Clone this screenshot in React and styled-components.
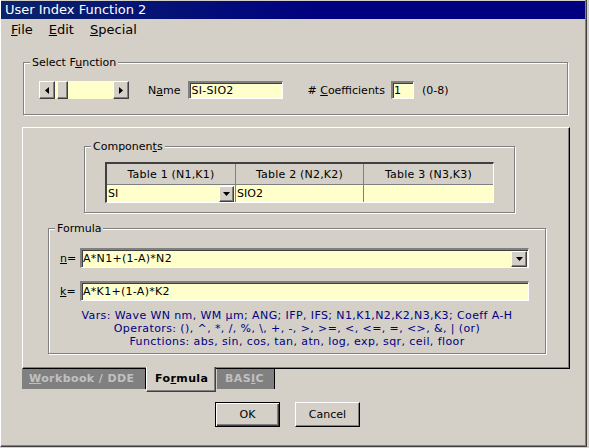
import React from "react";
import styled, { createGlobalStyle, css } from "styled-components";

const GlobalStyle = createGlobalStyle`
  html, body {
    margin: 0;
    padding: 0;
    background: #d4d0c8;
  }
  body {
    font-family: "DejaVu Sans", Verdana, sans-serif;
    font-size: 11px;
    color: #000;
  }
`;

const raised = css`
  border: 1px solid;
  border-color: #ffffff #404040 #404040 #ffffff;
  box-shadow: inset -1px -1px 0 #808080;
`;

const sunken = css`
  border-style: solid;
  border-width: 2px 1px 1px 2px;
  border-color: #808080 #ffffff #ffffff #808080;
  box-shadow: inset 1px 1px 0 #404040;
`;

const etched = css`
  position: relative;
  box-sizing: border-box;
  border: 1px solid #808080;
  box-shadow: inset 1px 1px 0 #ffffff, 1px 1px 0 #ffffff;
`;

const Window = styled.div`
  width: 587px;
  height: 447px;
  box-sizing: border-box;
  border-left: 1px solid #ffffff;
  border-right: 1px solid #404040;
  border-bottom: 1px solid #404040;
  padding: 1px 1px 1px 0;
  box-shadow: inset -1px -1px 0 #808080;
  background: #d4d0c8;
  display: flex;
  flex-direction: column;
`;

const TitleBar = styled.div`
  height: 18px;
  background: linear-gradient(to right, #0a246a, #000080 55%, #000080);
  color: #ffffff;
  font-size: 13px;
  line-height: 18px;
  padding-left: 4px;
`;

const MenuBar = styled.div`
  display: flex;
  height: 21px;
  padding-left: 2px;
  font-size: 13px;
  line-height: 21px;
`;

const MenuItem = styled.span`
  padding: 0 8px;
`;

const GroupBox = styled.div`
  ${etched};
  margin: ${(p) => p.$margin};
  width: ${(p) => p.$w}px;
  height: ${(p) => p.$h}px;
  padding: ${(p) => p.$pad || "0"};
`;

const Caption = styled.span`
  position: absolute;
  top: -7px;
  left: 6px;
  padding: 0 2px;
  background: #d4d0c8;
  line-height: 13px;
`;

const Row = styled.div`
  display: flex;
  align-items: center;
  padding-left: ${(p) => p.$pl || 0}px;
  margin-top: ${(p) => p.$mt || 0}px;
`;

const Scroll = styled.div`
  display: flex;
  width: 90px;
  height: 18px;
  background: #ffffcc;
`;

const ScrollBtn = styled.div`
  ${raised};
  box-sizing: border-box;
  width: 16px;
  height: 18px;
  background: #d4d0c8;
  display: flex;
  align-items: center;
  justify-content: center;
`;

const Thumb = styled.div`
  ${raised};
  box-sizing: border-box;
  width: 11px;
  height: 18px;
  margin-left: 2px;
  background: #d4d0c8;
`;

const Track = styled.div`
  flex: 1;
`;

const Label = styled.span`
  margin-left: ${(p) => p.$ml || 0}px;
  white-space: nowrap;
`;

const TextBox = styled.div`
  ${sunken};
  box-sizing: border-box;
  width: ${(p) => p.$w}px;
  height: ${(p) => p.$h || 18}px;
  margin-left: ${(p) => p.$ml || 0}px;
  background: #ffffcc;
  padding-left: 1px;
  display: flex;
  align-items: center;
  white-space: nowrap;
  letter-spacing: 0.3px;
`;

const Panel = styled.div`
  box-sizing: border-box;
  margin: 12px 0 0 21px;
  width: 548px;
  height: 242px;
  border: 1px solid;
  border-color: #ffffff #000000 #000000 #ffffff;
  box-shadow: inset -1px -1px 0 #808080;
  display: flex;
  flex-direction: column;
`;

const Grid = styled.div`
  box-sizing: border-box;
  width: 389px;
  height: 41px;
  border-style: solid;
  border-width: 2px 1px 1px 2px;
  border-color: #404040 #ffffff #ffffff #404040;
  display: grid;
  grid-template-columns: 129px 128px 1fr;
  grid-template-rows: 21px 17px;
`;

const HeadCell = styled.div`
  background: #d4d0c8;
  border-bottom: 1px solid #808080;
  border-right: ${(p) => (p.$last ? "none" : "1px solid #808080")};
  display: flex;
  align-items: center;
  justify-content: center;
  padding-top: 1px;
  letter-spacing: 0.2px;
`;

const DataCell = styled.div`
  background: #ffffcc;
  border-right: ${(p) => (p.$last ? "none" : "1px solid #808080")};
  display: flex;
  align-items: center;
  padding-left: 1px;
`;

const DropBtn = styled.div`
  ${raised};
  box-sizing: border-box;
  width: ${(p) => p.$w || 15}px;
  height: 16px;
  margin-left: auto;
  margin-right: 1px;
  background: #d4d0c8;
  display: flex;
  align-items: center;
  justify-content: center;
`;

const FieldLabel = styled.span`
  width: 20px;
`;

const Notes = styled.div`
  margin-top: 8px;
  text-align: center;
  color: #000080;
  line-height: 13px;
  letter-spacing: 0.4px;
  white-space: nowrap;
`;

const Tabs = styled.div`
  display: flex;
  align-items: flex-start;
  margin-left: 21px;
  height: 23px;
`;

const Tab = styled.div`
  box-sizing: border-box;
  width: ${(p) => p.$w}px;
  margin-right: ${(p) => p.$mr || 0}px;
  font-weight: bold;
  white-space: nowrap;
  letter-spacing: 0.4px;
  ${(p) =>
    p.$active
      ? css`
          position: relative;
          margin-top: -2px;
          height: 25px;
          padding: 2px 0 0 8px;
          line-height: 20px;
          background: #d4d0c8;
          color: #000000;
          border-left: 1px solid #ffffff;
          border-right: 1px solid #404040;
          border-bottom: 1px solid #404040;
          box-shadow: inset -1px -1px 0 #808080;
        `
      : css`
          height: 20px;
          padding-left: ${p.$pl || 7}px;
          line-height: 20px;
          background: #808080;
          color: #c0c0c0;
          border-right: 1px solid #000000;
        `}
`;

const Buttons = styled.div`
  display: flex;
  margin: 10px 0 0 214px;
  gap: 15px;
`;

const Button = styled.div`
  box-sizing: border-box;
  width: 65px;
  height: 25px;
  display: flex;
  align-items: center;
  justify-content: center;
  background: #d4d0c8;
  ${(p) =>
    p.$default
      ? css`
          border: 1px solid #000000;
          box-shadow: inset 1px 1px 0 #ffffff, inset -1px -1px 0 #404040,
            inset -2px -2px 0 #808080;
        `
      : css`
          border: 1px solid;
          border-color: #ffffff #000000 #000000 #ffffff;
          box-shadow: inset -1px -1px 0 #808080;
        `}
`;

const Arrow = ({ dir }) => {
  const pts = {
    left: "4,0 4,7 0,3.5",
    right: "0,0 0,7 4,3.5",
    down: "0,0 7,0 3.5,4",
  }[dir];
  const w = dir === "down" ? 7 : 4;
  const h = dir === "down" ? 4 : 7;
  return (
    <svg width={w} height={h} viewBox={`0 0 ${w} ${h}`}>
      <polygon points={pts} fill="#000" />
    </svg>
  );
};

export default function App() {
  return (
    <>
      <GlobalStyle />
      <Window>
        <TitleBar>User Index Function 2</TitleBar>
        <MenuBar>
          <MenuItem>
            <u>F</u>ile
          </MenuItem>
          <MenuItem>
            <u>E</u>dit
          </MenuItem>
          <MenuItem>
            <u>S</u>pecial
          </MenuItem>
        </MenuBar>

        <GroupBox $margin="22px 0 0 22px" $w={545} $h={53} $pad="18px 0 0 15px">
          <Caption>
            Select F<u>u</u>nction
          </Caption>
          <Row>
            <Scroll>
              <ScrollBtn>
                <Arrow dir="left" />
              </ScrollBtn>
              <Thumb />
              <Track />
              <ScrollBtn>
                <Arrow dir="right" />
              </ScrollBtn>
            </Scroll>
            <Label $ml={19}>
              N<u>a</u>me
            </Label>
            <TextBox $w={95} $ml={8}>
              SI-SIO2
            </TextBox>
            <Label $ml={24}>
              # <u>C</u>oefficients
            </Label>
            <TextBox $w={23} $ml={6}>
              1
            </TextBox>
            <Label $ml={8}>(0-8)</Label>
          </Row>
        </GroupBox>

        <Panel>
          <GroupBox $margin="18px 0 0 61px" $w={431} $h={67} $pad="15px 0 0 20px">
            <Caption>
              Componen<u>t</u>s
            </Caption>
            <Grid>
              <HeadCell>Table 1 (N1,K1)</HeadCell>
              <HeadCell>Table 2 (N2,K2)</HeadCell>
              <HeadCell $last>Table 3 (N3,K3)</HeadCell>
              <DataCell>
                SI
                <DropBtn>
                  <Arrow dir="down" />
                </DropBtn>
              </DataCell>
              <DataCell>SIO2</DataCell>
              <DataCell $last />
            </Grid>
          </GroupBox>

          <GroupBox $margin="15px 0 0 25px" $w={498} $h={126} $pad="19px 0 0 0">
            <Caption>Formula</Caption>
            <Row $pl={11}>
              <FieldLabel>
                <u>n</u>=
              </FieldLabel>
              <TextBox $w={449} $h={20}>
                A*N1+(1-A)*N2
                <DropBtn $w={16}>
                  <Arrow dir="down" />
                </DropBtn>
              </TextBox>
            </Row>
            <Row $pl={11} $mt={13}>
              <FieldLabel>
                <u>k</u>=
              </FieldLabel>
              <TextBox $w={449} $h={20}>
                A*K1+(1-A)*K2
              </TextBox>
            </Row>
            <Notes>
              Vars: Wave WN nm, WM µm; ANG; IFP, IFS; N1,K1,N2,K2,N3,K3; Coeff A-H
              <br />
              Operators: (), ^, *, /, %, \, +, -, &gt;, &gt;=, &lt;, &lt;=, =, &lt;&gt;, &amp;, | (or)
              <br />
              Functions: abs, sin, cos, tan, atn, log, exp, sqr, ceil, floor
            </Notes>
          </GroupBox>
        </Panel>

        <Tabs>
          <Tab $w={124}>
            <u>W</u>orkbook / DDE
          </Tab>
          <Tab $w={70} $mr={1} $active>
            Fo<u>r</u>mula
          </Tab>
          <Tab $w={58} $pl={8}>
            BAS<u>I</u>C
          </Tab>
        </Tabs>

        <Buttons>
          <Button $default>OK</Button>
          <Button>Cancel</Button>
        </Buttons>
      </Window>
    </>
  );
}
